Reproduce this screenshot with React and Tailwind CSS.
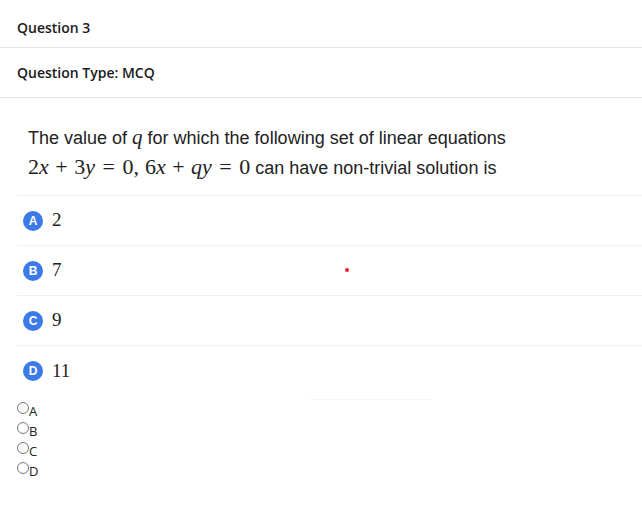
const options = [
  { key: 'A', value: '2' },
  { key: 'B', value: '7' },
  { key: 'C', value: '9' },
  { key: 'D', value: '11' },
]

function V({ children }) {
  return <i className="italic">{children}</i>
}

function Op({ children, wide }) {
  return <span className={wide ? 'mx-[7.5px]' : 'mx-[6.5px]'}>{children}</span>
}

export default function App() {
  return (
    <div className="w-[642px] h-[518px] bg-white text-[#222] overflow-hidden">
      {/* header */}
      <div className="h-[48px] flex items-center pt-[8px] px-[17px] border-b border-[#e3e5ea] font-['Open_Sans',sans-serif] font-semibold text-[14px] text-[#1a1a1a]">
        Question 3
      </div>
      <div className="h-[50px] flex items-center px-[17px] border-b border-[#e3e5ea] font-['Open_Sans',sans-serif] font-semibold text-[14px] text-[#1a1a1a]">
        Question Type: MCQ
      </div>

      <div className="ml-[17px]">
        {/* question */}
        <div className="pt-[24px] pb-[13px] pl-[11px] border-b border-[#efefef] font-['Liberation_Sans',Arial,sans-serif] text-[18px] leading-[30px] text-[#222]">
          <div className="h-[30px] whitespace-nowrap">
            The value of <span className="font-['Liberation_Serif',serif] text-[21px] leading-[30px]"><V>q</V></span> for which the following set of linear equations
          </div>
          <div className="h-[30px] whitespace-nowrap">
            <span className="font-['Liberation_Serif',serif] text-[22px] leading-[30px]">
              2<V>x</V><Op>+</Op>3<V>y</V><Op wide>=</Op>0,<span className="ml-[6px]" />6<V>x</V><Op>+</Op><V>qy</V><Op wide>=</Op>0
            </span>{' '}
            can have non-trivial solution is
          </div>
        </div>

        {/* options */}
        {options.map((o, i) => (
          <div
            key={o.key}
            className={`relative h-[50px] flex items-center pl-[6px] gap-[9px] ${i < options.length - 1 ? 'border-b border-[#efefef]' : ''}`}
          >
            <span className="w-[20px] h-[20px] rounded-full bg-[#3b7ae8] text-white flex items-center justify-center font-['Liberation_Sans',Arial,sans-serif] font-bold text-[12px]">
              {o.key}
            </span>
            <span className="font-['Liberation_Serif',serif] text-[19px] text-[#222]">{o.value}</span>
            {o.key === 'B' && (
              <span className="absolute left-[328px] top-[22px] w-[4px] h-[4px] rounded-full bg-[#e8202a]" />
            )}
          </div>
        ))}
      </div>

      {/* answer radios */}
      <div className="pt-[3px]">
        <div className="ml-[310px] w-[123px] h-px bg-[#f4f4f4]" />
        <div className="pl-[17px] flex flex-col font-['Open_Sans',sans-serif] text-[13px] text-[#222]">
          {options.map((o) => (
            <label key={o.key} className="h-[20px] flex items-start">
              <span className="mt-[2px] w-[12px] h-[12px] rounded-full border border-[#767676] bg-white" />
              <span className="mt-[3px] leading-[16px]">{o.key}</span>
            </label>
          ))}
        </div>
      </div>
    </div>
  )
}
